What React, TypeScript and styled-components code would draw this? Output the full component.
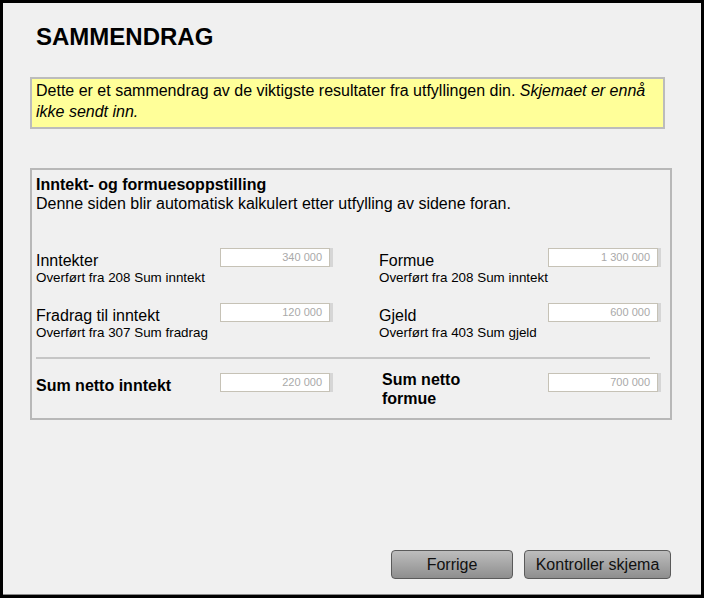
import React from 'react';
import styled, { createGlobalStyle } from 'styled-components';

const GlobalStyle = createGlobalStyle`
  html, body {
    margin: 0;
    padding: 0;
    background: #f0f0f0;
  }
  * {
    box-sizing: border-box;
  }
`;

interface Field {
  label: string;
  note?: string;
  value: string;
}

interface RowData {
  left: Field;
  right: Field;
}

const rows: RowData[] = [
  {
    left: { label: 'Inntekter', note: 'Overført fra 208 Sum inntekt', value: '340 000' },
    right: { label: 'Formue', note: 'Overført fra 208 Sum inntekt', value: '1 300 000' },
  },
  {
    left: { label: 'Fradrag til inntekt', note: 'Overført fra 307 Sum fradrag', value: '120 000' },
    right: { label: 'Gjeld', note: 'Overført fra 403 Sum gjeld', value: '600 000' },
  },
];

const Frame = styled.div`
  width: 704px;
  height: 598px;
  border: 3px solid #000;
  box-shadow: inset 0 -1px 0 #8a8a8a;
  background: #f0f0f0;
  display: flex;
  flex-direction: column;
  padding: 20px 30px 16px 27px;
  font-family: 'Liberation Sans', Arial, sans-serif;
  color: #000;
`;

const Title = styled.h1`
  margin: 0 0 0 6px;
  font-size: 24px;
  line-height: 28px;
  font-weight: bold;
`;

const Notice = styled.div`
  margin-top: 26px;
  width: 635px;
  background: #ffff99;
  border: 2px solid #bcbcbc;
  padding: 1px 4px 5px 4px;
  font-size: 16px;
  line-height: 21px;

  em {
    font-style: italic;
  }
`;

const Panel = styled.section`
  margin-top: 39px;
  width: 642px;
  border: 2px solid #b8b8b8;
  padding: 6px 20px 10px 4px;
`;

const PanelTitle = styled.div`
  font-size: 16px;
  line-height: 18px;
  font-weight: bold;
`;

const PanelText = styled.div`
  font-size: 16px;
  line-height: 19px;
`;

const Rows = styled.div`
  margin-top: 35px;
  display: flex;
  flex-direction: column;
  gap: 17px;
`;

const Row = styled.div`
  display: grid;
  grid-template-columns: 184px 111px 48px 169px 112px;
  align-items: start;
`;

const LabelCell = styled.div<{ $shift?: number; $narrow?: boolean; $raise?: number }>`
  padding-top: 3px;
  padding-left: ${p => p.$shift ?? 0}px;
  margin-top: ${p => -(p.$raise ?? 0)}px;
  max-width: ${p => (p.$narrow ? '100px' : 'none')};
`;

const Label = styled.div<{ $bold?: boolean }>`
  font-size: 16px;
  line-height: 19px;
  font-weight: ${p => (p.$bold ? 'bold' : 'normal')};
`;

const Note = styled.div`
  font-size: 13.4px;
  line-height: 16px;
`;

const ValueBox = styled.div`
  width: 110px;
  height: 19px;
  background: #fff;
  border: 1px solid #c6c2b6;
  box-shadow: 3px 0 0 #d6d6d6;
  text-align: right;
  padding-right: 7px;
  font-size: 11px;
  line-height: 17px;
  color: #a9a9a9;
`;

const Divider = styled.hr`
  margin: -1px 0 -3px 0;
  width: 614px;
  height: 2px;
  border: none;
  background: #c6c6c6;
`;

const Footer = styled.div`
  margin-top: auto;
  display: flex;
  justify-content: flex-end;
  gap: 11px;
`;

const Button = styled.button<{ $width: number }>`
  width: ${p => p.$width}px;
  height: 29px;
  border: 1px solid #5a5a5a;
  border-radius: 4px;
  background: linear-gradient(#bdbdbd, #8e8e8e);
  font-family: 'Liberation Sans', Arial, sans-serif;
  font-size: 16px;
  color: #111;
  padding: 0;
  cursor: pointer;
`;

const FieldCells = ({ field }: { field: Field }) => (
  <>
    <LabelCell>
      <Label>{field.label}</Label>
      {field.note && <Note>{field.note}</Note>}
    </LabelCell>
    <ValueBox>{field.value}</ValueBox>
  </>
);

const App = () => (
  <>
    <GlobalStyle />
    <Frame>
      <Title>SAMMENDRAG</Title>
      <Notice>
        Dette er et sammendrag av de viktigste resultater fra utfyllingen din.{' '}
        <em>Skjemaet er ennå ikke sendt inn.</em>
      </Notice>
      <Panel>
        <PanelTitle>Inntekt- og formuesoppstilling</PanelTitle>
        <PanelText>Denne siden blir automatisk kalkulert etter utfylling av sidene foran.</PanelText>
        <Rows>
          {rows.map(row => (
            <Row key={row.left.label}>
              <FieldCells field={row.left} />
              <span />
              <FieldCells field={row.right} />
            </Row>
          ))}
          <Divider />
          <Row>
            <LabelCell>
              <Label $bold>Sum netto inntekt</Label>
            </LabelCell>
            <ValueBox>220 000</ValueBox>
            <span />
            <LabelCell $shift={3} $narrow $raise={6}>
              <Label $bold>Sum netto formue</Label>
            </LabelCell>
            <ValueBox>700 000</ValueBox>
          </Row>
        </Rows>
      </Panel>
      <Footer>
        <Button $width={122}>Forrige</Button>
        <Button $width={147}>Kontroller skjema</Button>
      </Footer>
    </Frame>
  </>
);

export default App;
